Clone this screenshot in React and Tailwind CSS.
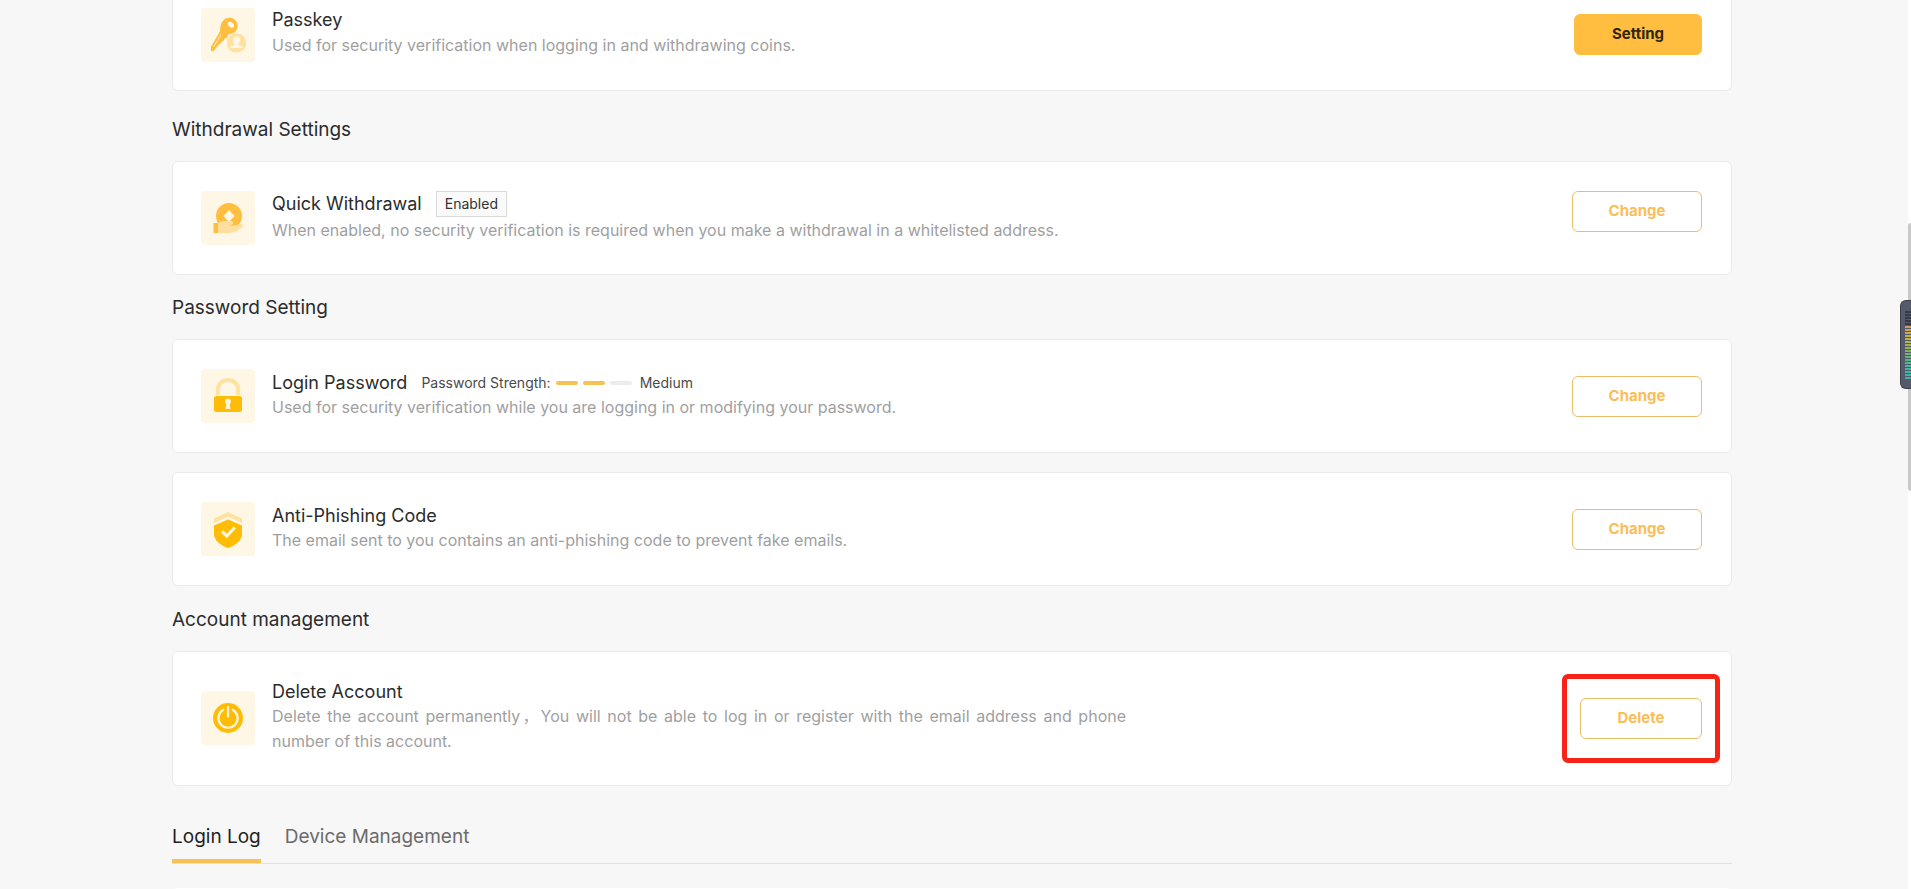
import { useState } from 'react';

// --- Icons ---
const KeyIcon = () => (
  <svg viewBox="0 0 54 54" className="h-full w-full" aria-hidden="true">
    <path fill="#ffbe3f" fillRule="evenodd" d="M22.5 12.2c3.2-3 8.6-3.2 11.8 0 3.2 3.300 3 8.500-.1 11.600-1.700 1.700-4.200 2.500-6.400 2.200l-2.300 4.200-1.900.4-.8 2.200-1.900.4-.6 2-1.900.6-5.200 6.800c-.9 1-3.200.900-3.200-.7v-3.100l9-15.500c.2-4.200.7-8.500 3.500-11.100zM27.200 14.300c-1 1.200-.6 3 .9 4.300s3.500 1.700 4.500.6.600-3-.9-4.300-3.500-1.700-4.500-.6z" />
    <path d="M12.500 39l7.500-12.500" stroke="#fff1cf" strokeWidth="1" />
    <circle cx="35.500" cy="35" r="10.200" fill="#ffe1a3" stroke="#fff7e8" strokeWidth="1" />
    <path fill="#fff7e8" d="M35.500 28.500c2.200 0 3.600 1.600 3.600 3.700 0 1.500-.8 2.800-1.700 3.500v1.200l3.700 1.600c.5.300.8.700.8 1.500H29.100c0-.8.3-1.200.8-1.500l3.700-1.600v-1.200c-.9-.7-1.700-2-1.700-3.500 0-2.100 1.400-3.700 3.600-3.700z" />
  </svg>
);

const CoinHandIcon = () => (
  <svg viewBox="0 0 54 54" className="h-full w-full" aria-hidden="true">
    <path fill="#ffbe3f" fillRule="evenodd" d="M28 12a13 13 0 1 1 0 26 13 13 0 0 1 0-26zM28 19l-5.500 6 5.500 6 5.500-6z" />
    <path fill="#ffdf9f" d="M17 32.500c2-1.800 4-2.500 7-2.500h6c2.400 0 2.900 3.300.5 3.900l-3.500.6h6l7-1.600c2.500-.3 2.700 2.400.6 3.700C36.500 40.500 33 42 28 42H17z" />
    <path fill="#ffbe3f" d="M12.500 32H17v10h-4.500z" />
  </svg>
);

const LockIcon = () => (
  <svg viewBox="0 0 54 54" className="h-full w-full" aria-hidden="true">
    <path d="M16.800 26v-5c0-6 4.500-10 10.200-10s10.200 4 10.200 10v5" fill="none" stroke="#ffe1a0" strokeWidth="4" />
    <rect x="13" y="27" width="28" height="16" rx="2.500" fill="#ffbc06" />
    <path fill="#fff5dc" d="M27 29.500a3 3 0 0 1 1.700 5.500l.8 5h-5l.8-5a3 3 0 0 1 1.700-5.500z" />
  </svg>
);

const ShieldIcon = () => (
  <svg viewBox="0 0 54 54" className="h-full w-full" aria-hidden="true">
    <path fill="#ffe1a0" d="M27 10l14 6.500V21l-14-6.500L13 21v-4.500z" />
    <path fill="#ffbc06" d="M27 17.500l14 6v8.500c0 6-6 11.500-14 14-8-2.500-14-8-14-14v-8.500z" />
    <path d="M21 29.500l4.800 4.500 8-8.500" fill="none" stroke="#fff5dc" strokeWidth="3.200" />
  </svg>
);

const PowerIcon = () => (
  <svg viewBox="0 0 54 54" className="h-full w-full" aria-hidden="true">
    <circle cx="27" cy="27" r="15" fill="#ffbc06" />
    <path d="M22.300 18.800a9.600 9.600 0 1 0 9.400 0M27 16v9.500" fill="none" stroke="#fff5dc" strokeWidth="2.200" strokeLinecap="round" />
  </svg>
);

// --- Building blocks ---
const BUTTON_STYLES = {
  primary: 'w-32 border-[#ffbe3f] bg-[#ffbe3f] text-[#33240a]',
  outline: 'w-[130px] border-[#ebbd68] bg-white text-[#fbbd58]',
  danger: 'w-[122px] border-[#ebbd68] bg-white text-[#fbbd58]',
};

const ActionButton = ({ children, variant = 'outline' }) => (
  <button type="button" className={`h-[41px] rounded-md border text-[15px] font-bold ${BUTTON_STYLES[variant]}`}>
    {children}
  </button>
);

const SettingRow = ({ icon, title, extra, description, action, alignTop }) => (
  <div className={`flex justify-between pr-[29px] pl-7 ${alignTop ? 'items-start' : 'items-center'}`}>
    <div className={`flex gap-[17px] ${alignTop ? 'items-start' : 'items-center'}`}>
      <div className="size-[54px] shrink-0 overflow-hidden rounded-sm bg-[#fff7e6]">{icon}</div>
      <div className={alignTop ? 'flex flex-col gap-px' : 'flex flex-col pb-[2px]'}>
        <div className="flex items-center gap-[14px]">
          <h3 className="text-[18px] leading-6 text-[#2b2b2b]">{title}</h3>
          {extra}
        </div>
        <p className="max-w-[854px] text-justify text-[16px] leading-[25px] text-[#9f9f9f]">{description}</p>
      </div>
    </div>
    {action}
  </div>
);

const Card = ({ children }) => (
  <div className="rounded-md border border-[#ebebeb] bg-white py-[29px]">{children}</div>
);

const SectionTitle = ({ children }) => (
  <h2 className="pt-[19px] pb-[17px] text-[19px] leading-7 text-[#2b2b2b]">{children}</h2>
);

const PasswordStrength = ({ level, label }) => (
  <div className="flex items-center text-[14px] leading-6 text-[#4a4a4a]">
    <span>Password Strength:</span>
    <span className="mr-2 ml-[5px] flex gap-[5px]">
      {[1, 2, 3].map((step) => (
        <span key={step} className={`h-1 w-[22px] rounded-full ${step <= level ? 'bg-[#f8c152]' : 'bg-[#ebebf0]'}`} />
      ))}
    </span>
    <span>{label}</span>
  </div>
);

const METER_COLORS = [
  '#343a4a', '#343a4a', '#343a4a', '#343a4a', '#343a4a',
  '#d9974f', '#d3a04a', '#cfa945', '#c9ad42', '#c2b045', '#b5b24a', '#a3b250', '#92b357', '#80b45f',
  '#6fb469', '#60b575', '#55b683', '#4cb790', '#45b79b', '#40b6a2', '#3eb5a5', '#3cb4a7', '#3bb3a8',
];

const LevelMeter = () => (
  <div className="absolute top-[300px] right-0 h-[89px] w-[11px] rounded-l-md border border-r-0 border-[#3c404c] bg-[#555a6a] py-[10px] pl-1">
    <div className="flex flex-col gap-px">
      {METER_COLORS.map((color, i) => (
        <span key={i} className="h-[2px] w-full" style={{ backgroundColor: color }} />
      ))}
    </div>
  </div>
);

const TABS = ['Login Log', 'Device Management'];

export default function App() {
  const [tab, setTab] = useState(TABS[0]);

  return (
    <div
      lang="zh-CN"
      className="relative h-screen overflow-hidden bg-[#f7f7f7] pr-[7px] font-['Inter','Noto_Sans_CJK_SC',sans-serif]"
    >
      <main className="mx-auto max-w-[1560px]">
        <div className="rounded-b-md border border-t-0 border-[#ebebeb] bg-white pt-2 pb-7">
          <SettingRow
            alignTop
            icon={<KeyIcon />}
            title="Passkey"
            description="Used for security verification when logging in and withdrawing coins."
            action={<div className="pt-[6px]"><ActionButton variant="primary">Setting</ActionButton></div>}
          />
        </div>

        <div className="pt-[6px]"><SectionTitle>Withdrawal Settings</SectionTitle></div>
        <Card>
          <SettingRow
            alignTop
            icon={<CoinHandIcon />}
            title="Quick Withdrawal"
            extra={<span className="border border-[#d9d9d9] bg-[#fafafa] px-2 text-[14px] leading-6 text-[#333333]">Enabled</span>}
            description="When enabled, no security verification is required when you make a withdrawal in a whitelisted address."
            action={<ActionButton>Change</ActionButton>}
          />
        </Card>

        <SectionTitle>Password Setting</SectionTitle>
        <div className="flex flex-col gap-[19px]">
          <Card>
            <SettingRow
              icon={<LockIcon />}
              title="Login Password"
              extra={<PasswordStrength level={2} label="Medium" />}
              description="Used for security verification while you are logging in or modifying your password."
              action={<ActionButton>Change</ActionButton>}
            />
          </Card>
          <Card>
            <SettingRow
              icon={<ShieldIcon />}
              title="Anti-Phishing Code"
              description="The email sent to you contains an anti-phishing code to prevent fake emails."
              action={<ActionButton>Change</ActionButton>}
            />
          </Card>
        </div>

        <div className="pt-px"><SectionTitle>Account management</SectionTitle></div>
        <div className="rounded-md border border-[#ebebeb] bg-white pt-7 pb-[29px]">
          <SettingRow
            icon={<PowerIcon />}
            title="Delete Account"
            description="Delete the account permanently，You will not be able to log in or register with the email address and phone number of this account."
            action={
              <div className="relative">
                <ActionButton variant="danger">Delete</ActionButton>
                <div className="pointer-events-none absolute -inset-x-[18px] -top-6 -bottom-6 rounded-md border-[5px] border-[#f62317]" />
              </div>
            }
          />
        </div>

        <div role="tablist" className="mt-[37px] mb-6 flex gap-6 border-b border-[#e2e2e2]">
          {TABS.map((name) => (
            <button
              key={name}
              type="button"
              role="tab"
              aria-selected={tab === name}
              onClick={() => setTab(name)}
              className={`border-b-4 pb-2 text-[19px] leading-7 ${
                tab === name ? 'border-[#f8c152] text-[#1f1f1f]' : 'border-transparent text-[#6b6b6b]'
              }`}
            >
              {name}
            </button>
          ))}
        </div>
        <div className="h-24 rounded-md bg-white" />
      </main>

      {/* scroll track */}
      <div className="absolute inset-y-0 right-0 w-[3px] bg-white">
        <div className="mt-[223px] h-[268px] rounded-l-sm bg-[#c9c9c9]" />
      </div>
      <LevelMeter />
    </div>
  );
}
